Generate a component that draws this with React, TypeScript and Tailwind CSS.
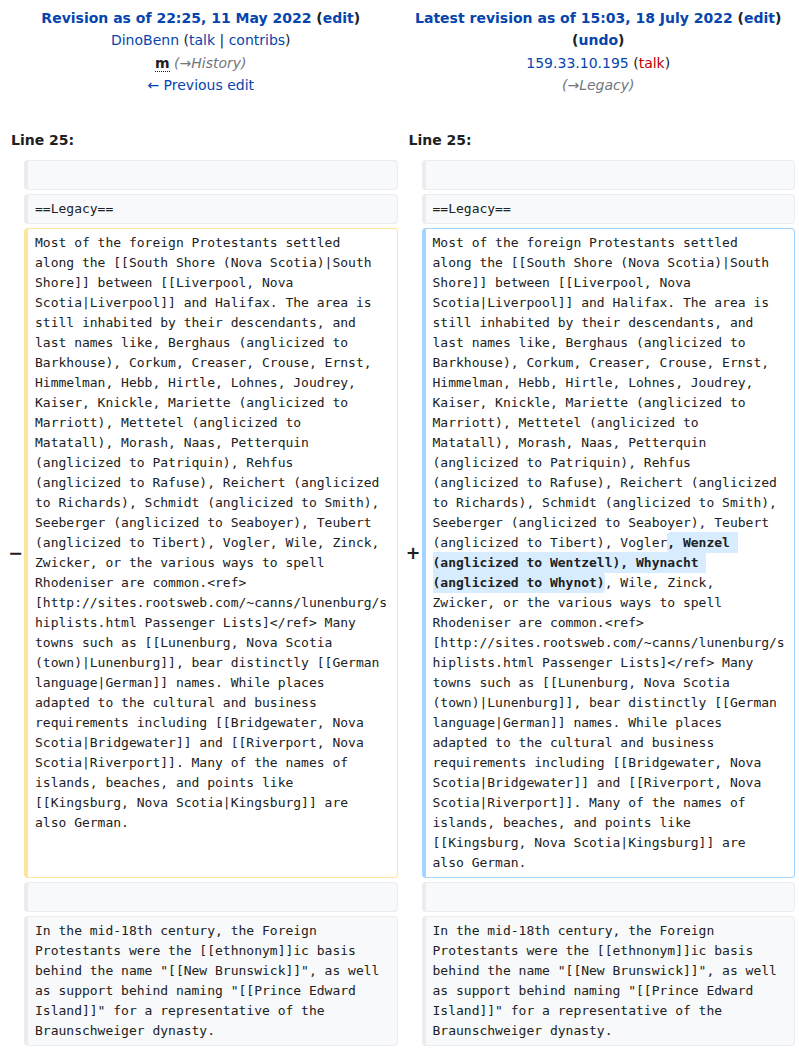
import React from "react";

const sans = "font-['DejaVu_Sans',sans-serif]";
const mono = "font-['DejaVu_Sans_Mono',monospace]";

// lines as wrapped in the diff view
const head = [
  "Most of the foreign Protestants settled",
  "along the [[South Shore (Nova Scotia)|South",
  "Shore]] between [[Liverpool, Nova",
  "Scotia|Liverpool]] and Halifax. The area is",
  "still inhabited by their descendants, and",
  "last names like, Berghaus (anglicized to",
  "Barkhouse), Corkum, Creaser, Crouse, Ernst,",
  "Himmelman, Hebb, Hirtle, Lohnes, Joudrey,",
  "Kaiser, Knickle, Mariette (anglicized to",
  "Marriott), Mettetel (anglicized to",
  "Matatall), Morash, Naas, Petterquin",
  "(anglicized to Patriquin), Rehfus",
  "(anglicized to Rafuse), Reichert (anglicized",
  "to Richards), Schmidt (anglicized to Smith),",
  "Seeberger (anglicized to Seaboyer), Teubert",
].join("\n");

const tail = [
  "Zwicker, or the various ways to spell",
  "Rhodeniser are common.<ref>",
  "[http://sites.rootsweb.com/~canns/lunenburg/s",
  "hiplists.html Passenger Lists]</ref> Many",
  "towns such as [[Lunenburg, Nova Scotia",
  "(town)|Lunenburg]], bear distinctly [[German",
  "language|German]] names. While places",
  "adapted to the cultural and business",
  "requirements including [[Bridgewater, Nova",
  "Scotia|Bridgewater]] and [[Riverport, Nova",
  "Scotia|Riverport]]. Many of the names of",
  "islands, beaches, and points like",
  "[[Kingsburg, Nova Scotia|Kingsburg]] are",
  "also German.",
].join("\n");

const lastPara = [
  "In the mid-18th century, the Foreign",
  "Protestants were the [[ethnonym]]ic basis",
  'behind the name "[[New Brunswick]]", as well',
  'as support behind naming "[[Prince Edward',
  'Island]]" for a representative of the',
  "Braunschweiger dynasty.",
].join("\n");

const box = `${mono} rounded-[4px] border border-l-4 pl-[7px] pr-[5px] py-[4px] text-[13px] leading-[20px] whitespace-pre text-[#202122] overflow-hidden`;
const context = `${box} bg-[#f8f9fa] border-[#eaecf0]`;

function Marker({ sign }: { sign: string }) {
  return (
    <div className={`${sans} flex items-center justify-end translate-x-[3px] text-[17.5px] font-bold text-[#202122]`}>
      {sign}
    </div>
  );
}

function ContextRow({ text }: { text: string }) {
  return (
    <>
      <div />
      <div className={context}>{text || "\u00a0"}</div>
      <div />
      <div className={context}>{text || "\u00a0"}</div>
    </>
  );
}

export default function App() {
  return (
    <div className={`${sans} w-full bg-white text-[14px] leading-[22.4px] text-[#202122]`}>
      <div className="grid grid-cols-[16px_minmax(0,1fr)_16px_minmax(0,1fr)] gap-[4px] p-[4px]">
        {/* Titles */}
        <div className="col-span-2 px-[7px] pt-[3px] text-center">
          <div className="font-bold">
            <span className="text-[#0645ad]">Revision as of 22:25, 11 May 2022</span> (
            <span className="text-[#0645ad]">edit</span>)
          </div>
          <div>
            <span className="text-[#0645ad]">DinoBenn</span> (
            <span className="text-[#0645ad]">talk</span> |{" "}
            <span className="text-[#0645ad]">contribs</span>)
          </div>
          <div>
            <abbr className="font-bold no-underline border-b border-dotted border-[#202122]">m</abbr>{" "}
            <span className="italic text-[#72777d]">(→History)</span>
          </div>
          <div className="text-[#0645ad]">← Previous edit</div>
        </div>
        <div className="col-span-2 px-[7px] pt-[3px] text-center">
          <div className="font-bold">
            <span className="text-[#0645ad]">Latest revision as of 15:03, 18 July 2022</span> (
            <span className="text-[#0645ad]">edit</span>)
          </div>
          <div className="font-bold">
            (<span className="text-[#0645ad]">undo</span>)
          </div>
          <div>
            <span className="text-[#0645ad]">159.33.10.195</span> (
            <span className="text-[#ba0000]">talk</span>)
          </div>
          <div className="italic text-[#72777d]">(→Legacy)</div>
        </div>

        {/* Line numbers */}
        <div className="col-span-2 px-[7px] pt-[28px] pb-[5px] font-bold">Line 25:</div>
        <div className="col-span-2 px-[7px] pt-[28px] pb-[5px] font-bold">Line 25:</div>

        <ContextRow text="" />
        <ContextRow text="==Legacy==" />

        {/* Changed paragraph */}
        <Marker sign="−" />
        <div className={`${box} bg-white border-[#ffe49c]`}>
          {head + "\n(anglicized to Tibert), Vogler, Wile, Zinck,\n" + tail}
        </div>
        <Marker sign="+" />
        <div className={`${box} bg-white border-[#a3d3ff]`}>
          {head + "\n(anglicized to Tibert), Vogler"}
          <span className="font-bold bg-[#d8ecff] rounded-[4px] py-[3px]">
            {", Wenzel \n(anglicized to Wentzell), Whynacht \n(anglicized to Whynot)"}
          </span>
          {", Wile, Zinck,\n" + tail}
        </div>

        <ContextRow text="" />
        <ContextRow text={lastPara} />
      </div>
    </div>
  );
}
